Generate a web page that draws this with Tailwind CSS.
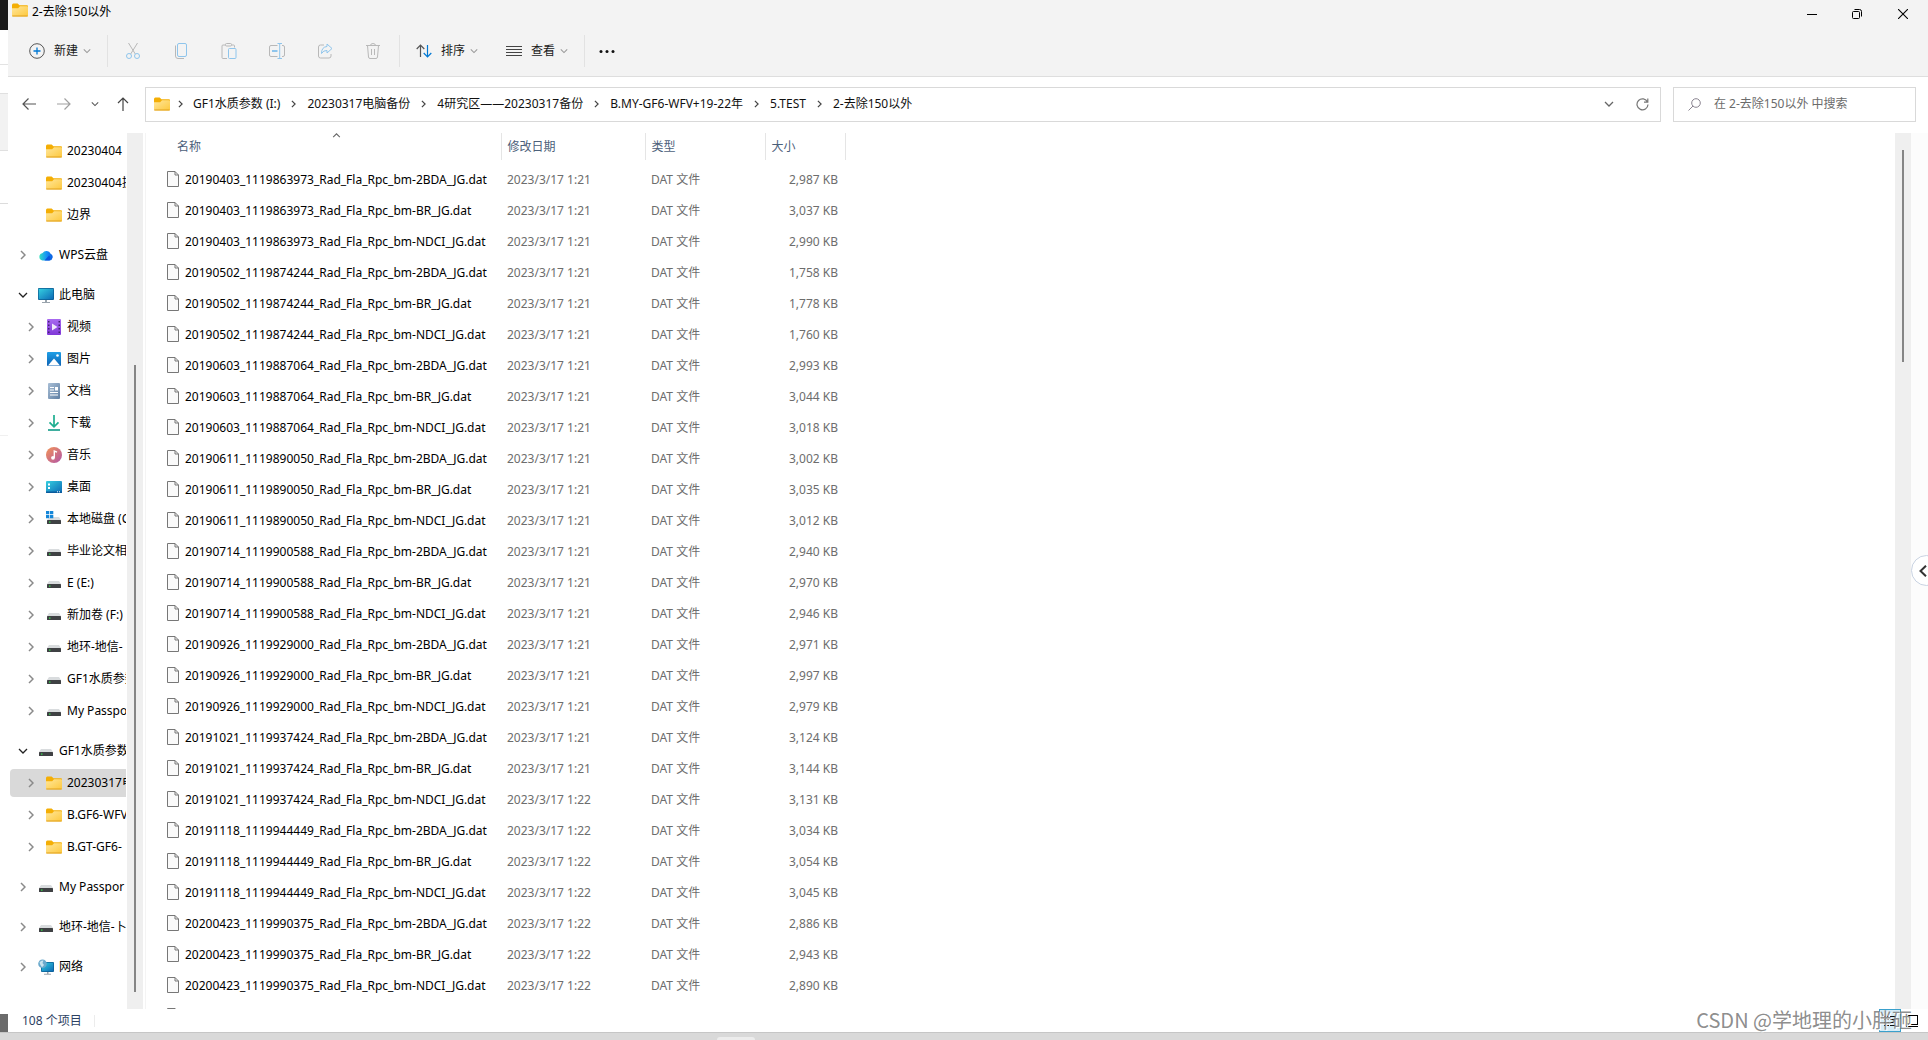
<!DOCTYPE html>
<html lang="zh-CN">
<head>
<meta charset="utf-8">
<title>2-去除150以外</title>
<script src="https://cdn.jsdelivr.net/npm/@tailwindcss/browser@4"></script>
</head>
<body class="h-screen overflow-hidden flex flex-col bg-white text-black text-[12px] leading-4 font-['Noto_Sans','Noto_Sans_CJK_SC',sans-serif]">

<svg class="absolute size-0" aria-hidden="true">
  <defs>
    <linearGradient id="gFolder" x1="0" y1="0" x2="1" y2="1"><stop offset="0" stop-color="#ffe69b"/><stop offset="1" stop-color="#fdc83c"/></linearGradient>
    <linearGradient id="gScreen" x1="0" y1="0" x2="1" y2="1"><stop offset="0" stop-color="#35cfe0"/><stop offset="1" stop-color="#0c69b5"/></linearGradient>
    <linearGradient id="gCloud" x1="0" y1="0" x2="1" y2="0"><stop offset="0" stop-color="#35e0c0"/><stop offset=".5" stop-color="#1897f5"/><stop offset="1" stop-color="#0a5be0"/></linearGradient>
    <linearGradient id="gVideo" x1="0" y1="0" x2="0" y2="1"><stop offset="0" stop-color="#a86af0"/><stop offset="1" stop-color="#8038d8"/></linearGradient>
    <linearGradient id="gPic" x1="0" y1="0" x2="0" y2="1"><stop offset="0" stop-color="#1f9fe6"/><stop offset="1" stop-color="#0c62b4"/></linearGradient>
    <linearGradient id="gDoc" x1="0" y1="0" x2="1" y2="1"><stop offset="0" stop-color="#a9bfd6"/><stop offset="1" stop-color="#5f7fa3"/></linearGradient>
    <linearGradient id="gMusic" x1="0" y1="0" x2="1" y2="1"><stop offset="0" stop-color="#f39455"/><stop offset="1" stop-color="#b154a8"/></linearGradient>
  </defs>
  <symbol id="folder" viewBox="0 0 16 16"><path d="M0 3.2Q0 1.5 1.3 1.5H5.6L7.5 3.3H15Q16 3.3 16 4.3V8H0Z" fill="#f4ae05"/><path d="M0 6.2H6.2L8 4.3H15.2Q16 4.3 16 5.2V13.4Q16 14.5 15 14.5H1Q0 14.5 0 13.4Z" fill="url(#gFolder)"/><path d="M.3 14H15.7" stroke="#e0a01d" stroke-width="1"/></symbol>
  <symbol id="cloud" viewBox="0 0 16 16"><path d="M4.500 13.500H11.500A3.500 3.500 0 0 0 12.600 6.800 4.500 4.500 0 0 0 4.600 6 3.800 3.800 0 0 0 4.500 13.500Z" fill="url(#gCloud)"/><path d="M6.500 13.500L11 8.500A3.400 3.400 0 0 1 11.500 13.500Z" fill="#0a55dc"/></symbol>
  <symbol id="pc" viewBox="0 0 16 16"><rect x="0" y="1" width="16" height="12" rx="1" fill="#0b5c92"/><rect x=".7" y="1.700" width="14.600" height="10.600" rx=".5" fill="url(#gScreen)"/><path d="M7 13H9V15H12V16H4V15H7Z" fill="#9aa4ad"/></symbol>
  <symbol id="video" viewBox="0 0 16 16"><rect x="1" y="0" width="14" height="16" rx="1" fill="url(#gVideo)"/><path d="M2 2h1.500v1.500H2zM2 5.500h1.500V7H2zM2 9h1.500v1.500H2zM2 12.500h1.500V14H2zM12.500 2H14v1.500h-1.500zM12.500 5.500H14V7h-1.500zM12.500 9H14v1.500h-1.500zM12.500 12.500H14V14h-1.500z" fill="#45206f"/><path d="M6 4.500L11.500 8 6 11.500Z" fill="#f1e9fb"/></symbol>
  <symbol id="pic" viewBox="0 0 16 16"><rect x="1" y="1" width="14" height="14" rx="1" fill="url(#gPic)"/><path d="M2 14.500L8 7.500 14 14.500Z" fill="#fff"/><circle cx="11.500" cy="4.500" r="1.300" fill="#fff"/></symbol>
  <symbol id="doc" viewBox="0 0 16 16"><rect x="2" y="0" width="12" height="16" rx="1" fill="url(#gDoc)"/><path d="M4 4.500H8M4 7H8M4 9.500H12M4 12H12" stroke="#fff"/><rect x="9" y="4" width="3" height="3.500" fill="#fff"/></symbol>
  <symbol id="down" viewBox="0 0 16 16"><path d="M8 0V11.500M3.500 7.300L8 11.800 12.500 7.300" fill="none" stroke="#1eae90" stroke-width="1.700"/><path d="M2 15H14" stroke="#109a88" stroke-width="1.600"/></symbol>
  <symbol id="music" viewBox="0 0 16 16"><circle cx="8" cy="8" r="8" fill="url(#gMusic)"/><circle cx="7" cy="10.800" r="1.900" fill="#fff"/><path d="M8.300 10.800V4L11 5.200" fill="none" stroke="#fff" stroke-width="1.400"/></symbol>
  <symbol id="desk" viewBox="0 0 16 16"><rect x="0" y="2" width="16" height="12" rx="1" fill="url(#gScreen)"/><path d="M2 4.500h2v2H2zM2 8h2v2H2z" fill="#fff"/><path d="M0 12.500H16V13.500Q16 14 15 14H1Q0 14 0 13.500Z" fill="#0a5a9c"/><path d="M11 12.800h1M13 12.800h1" stroke="#fff"/></symbol>
  <symbol id="drive" viewBox="0 0 16 16"><path d="M3 6H13L15 9H1Z" fill="#d9dcde"/><rect x="1" y="9" width="14" height="4" rx=".5" fill="#3f4144"/><rect x="3" y="10.500" width="1.500" height="1.200" fill="#35e04a"/></symbol>
  <symbol id="sysdrive" viewBox="0 0 16 16"><path d="M5 6H13L15 9H1L3 7Z" fill="#d9dcde"/><rect x="1" y="9" width="14" height="4" rx=".5" fill="#3f4144"/><rect x="3" y="10.500" width="1.500" height="1.200" fill="#35e04a"/><path d="M0 0h3.300v3.300H0zM4 0h3.300v3.300H4zM0 4h3.300v3.300H0zM4 4h3.300v3.300H4z" fill="#1486d8"/></symbol>
  <symbol id="net" viewBox="0 0 16 16"><rect x="3" y="3" width="13" height="10" rx="1" fill="#0b5c92"/><rect x="3.700" y="3.700" width="11.600" height="8.600" fill="url(#gScreen)"/><path d="M9 13h1.500v1.700H13v1H6v-1h3z" fill="#9aa4ad"/><circle cx="4.500" cy="4.800" r="4.300" fill="#6aa9cc"/><path d="M1.500 3.500Q3 1 5.500 1.500L4.500 4 6 6 4 8.300Q2 6 1.500 3.500Z" fill="#c9e3ee"/></symbol>
  <symbol id="file" viewBox="0 0 12 16"><path d="M.5.500H8L11.500 4V15.500H.5Z" fill="#fafafa" stroke="#777"/><path d="M8 .5V4H11.500" fill="none" stroke="#777"/></symbol>
  <symbol id="chevR" viewBox="0 0 6 10"><path d="M1 1L5 5 1 9" fill="none" stroke="currentColor" stroke-width="1.500"/></symbol>
  <symbol id="chevD" viewBox="0 0 10 6"><path d="M1 1L5 5 9 1" fill="none" stroke="currentColor" stroke-width="1.300"/></symbol>
</svg>

<div class="flex-1 min-h-0 flex">
  <!-- sliver of the window behind -->
  <div class="w-2 shrink-0 flex flex-col">
    <div class="h-[30px] bg-[#1a1a1a]"></div>
    <div class="h-[35px] border-b border-[#e3e3e3]"></div>
    <div class="h-7"></div>
    <div class="h-[58px] bg-[#f2f2f2] border-y border-[#e0e0e0]"></div>
    <div class="h-[53px] border-b border-[#dcdcdc]"></div>
    <div class="h-[232px] border-b border-[#f0f0f0]"></div>
    <div class="flex-1"></div>
    <div class="h-[18px] bg-[#6b6b6b]"></div>
  </div>

  <div class="flex-1 min-w-0 flex flex-col">
    <header class="h-[77px] shrink-0 bg-[#f3f3f3] border-b border-[#dedede] flex flex-col">
      <div class="h-6 flex items-center pl-1">
        <svg class="size-4 -mt-1"><use href="#folder"/></svg>
        <h1 class="ml-1 flex-1">2-去除150以外</h1>
        <div class="flex pt-1 pr-[2px]">
          <button aria-label="最小化" class="w-[45px] grid place-items-center"><svg class="size-[10px]" viewBox="0 0 10 10"><path d="M0 5.500H10" stroke="#000"/></svg></button>
          <button aria-label="还原" class="w-[45px] grid place-items-center"><svg class="size-[10px]" viewBox="0 0 10 10" fill="none" stroke="#000"><rect x=".5" y="2.500" width="7" height="7" rx="1"/><path d="M2.500 .5H7.500Q9.500 .5 9.500 2.500V7.500"/></svg></button>
          <button aria-label="关闭" class="w-[47px] grid place-items-center"><svg class="size-[10px]" viewBox="0 0 10 10"><path d="M0 0L10 10M10 0L0 10" stroke="#000" stroke-width="1.100"/></svg></button>
        </div>
      </div>
      <div class="flex-1 flex items-center pt-px text-[#1a1a1a]">
        <button class="ml-[21px] flex items-center gap-[9px]">
          <svg class="size-4" viewBox="0 0 16 16" fill="none"><circle cx="8" cy="8" r="7.300" stroke="#555"/><path d="M8 4.500V11.500M4.500 8H11.500" stroke="#0078d4" stroke-width="1.300"/></svg>
          <span>新建</span><svg class="w-2 h-[6px] -ml-1 text-[#999]"><use href="#chevD"/></svg>
        </button>
        <div class="ml-4 w-px h-8 bg-[#e2e2e2]"></div>
        <div class="mx-px flex">
          <button aria-label="剪切" class="w-12 grid place-items-center"><svg class="size-4" viewBox="0 0 16 16" fill="none"><path d="M3.500 0L10.300 11M12.500 0L5.700 11" stroke="#b8b8b8"/><circle cx="4" cy="13" r="2.500" stroke="#8fc5ec"/><circle cx="12" cy="13" r="2.500" stroke="#8fc5ec"/></svg></button>
          <button aria-label="复制" class="w-12 grid place-items-center"><svg class="size-4" viewBox="0 0 16 16" fill="none"><rect x="4.500" y=".5" width="9" height="13" rx="1.500" stroke="#8fc5ec"/><path d="M2.500 2.500V13Q2.500 15.500 5 15.500H11" stroke="#b8b8b8"/></svg></button>
          <button aria-label="粘贴" class="w-12 grid place-items-center"><svg class="size-4" viewBox="0 0 16 16" fill="none"><path d="M4.500 2H2Q1 2 1 3V14.500Q1 15.500 2 15.500H6M10.500 2H12.500Q13.500 2 13.500 3V4.500" stroke="#b8b8b8"/><rect x="4.500" y=".5" width="6" height="2.500" rx="1" stroke="#b8b8b8"/><rect x="7.500" y="5.500" width="7.500" height="10" rx="1" stroke="#8fc5ec"/></svg></button>
          <button aria-label="重命名" class="w-12 grid place-items-center"><svg class="size-4" viewBox="0 0 16 16" fill="none"><path d="M8.500 2.500H2Q.5 2.500 .5 4V12Q.5 13.500 2 13.500H8.500M13 2.500H14Q15.500 2.500 15.500 4V12Q15.500 13.500 14 13.500H13" stroke="#b8b8b8"/><path d="M8.500 .5H13M8.500 15.500H13M10.700 .5V15.500" stroke="#8fc5ec"/><path d="M3 8H8.500" stroke="#8fc5ec" stroke-width="2"/></svg></button>
          <button aria-label="共享" class="w-12 grid place-items-center"><svg class="size-4" viewBox="0 0 16 16" fill="none"><path d="M7 2H3.500Q1.500 2 1.500 4V13Q1.500 15 3.500 15H12Q14 15 14 13V11" stroke="#b8b8b8"/><path d="M10 1L15 5.500 10 10V7.500Q6.500 7.200 4.500 10.500 4.500 4 10 3.500Z" stroke="#8fc5ec"/></svg></button>
          <button aria-label="删除" class="w-12 grid place-items-center"><svg class="size-4" viewBox="0 0 16 16" fill="none" stroke="#b8b8b8"><path d="M1 2.500H15M5.500 2.500Q5.500 .5 8 .5T10.500 2.500M2.500 2.500L3.500 14Q3.700 15.500 5 15.500H11Q12.300 15.500 12.500 14L13.500 2.500M6.500 6V12M9.500 6V12"/></svg></button>
        </div>
        <div class="ml-px w-px h-8 bg-[#e2e2e2]"></div>
        <button class="ml-4 flex items-center gap-[9px]">
          <svg class="size-4" viewBox="0 0 16 16" fill="none" stroke-width="1.200"><path d="M4.500 14V2M.7 6L4.500 2 8.300 6" stroke="#555"/><path d="M11.500 2V14M7.700 10L11.500 14 15.300 10" stroke="#0078d4"/></svg>
          <span>排序</span><svg class="w-2 h-[6px] -ml-1 text-[#999]"><use href="#chevD"/></svg>
        </button>
        <button class="ml-7 flex items-center gap-[9px]">
          <svg class="size-4" viewBox="0 0 16 16"><path d="M0 3.500H16M0 6.500H16M0 9.500H16M0 12.500H16" stroke="#444"/></svg>
          <span>查看</span><svg class="w-2 h-[6px] -ml-1 text-[#999]"><use href="#chevD"/></svg>
        </button>
        <div class="ml-4 w-px h-8 bg-[#e2e2e2]"></div>
        <button aria-label="更多" class="ml-[14px]"><svg class="size-4" viewBox="0 0 16 16" fill="#111"><circle cx="2" cy="8.500" r="1.500"/><circle cx="8" cy="8.500" r="1.500"/><circle cx="14" cy="8.500" r="1.500"/></svg></button>
      </div>
    </header>

    <nav class="h-14 shrink-0 flex items-center pr-3 pl-[14px] pb-[2px]">
      <div class="w-[123px] flex items-center">
        <button aria-label="后退" class="w-[14px]"><svg class="size-[14px]" viewBox="0 0 14 14" fill="none" stroke="#555" stroke-width="1.200"><path d="M14 7H1M6.500 1.500L1 7 6.500 12.500"/></svg></button>
        <button aria-label="前进" class="ml-[21px] w-[14px]"><svg class="size-[14px]" viewBox="0 0 14 14" fill="none" stroke="#a0a0a0" stroke-width="1.200"><path d="M0 7H13M7.500 1.500L13 7 7.500 12.500"/></svg></button>
        <button aria-label="最近" class="ml-5 w-2"><svg class="w-2 h-[6px] text-[#555]"><use href="#chevD"/></svg></button>
        <button aria-label="向上" class="ml-[18px] w-3"><svg class="w-3 h-[14px]" viewBox="0 0 12 14" fill="none" stroke="#444" stroke-width="1.200"><path d="M6 14V1M1 6L6 1 11 6"/></svg></button>
      </div>
      <div class="flex-1 h-[35px] border border-[#d9d9d9] flex items-center pl-2 text-[#111]">
        <svg class="size-4"><use href="#folder"/></svg>
        <svg class="mx-2 w-[5px] h-2 text-[#444]"><use href="#chevR"/></svg>
        <div id="crumbs" class="flex-1 flex items-center pl-[2px]"></div>
        <button aria-label="展开" class="mr-[22px]"><svg class="w-[10px] h-[6px] text-[#666]"><use href="#chevD"/></svg></button>
        <button aria-label="刷新" class="mr-[11px]"><svg class="size-[13px]" viewBox="0 0 13 13" fill="none" stroke="#777" stroke-width="1.200"><path d="M11.500 4A5.500 5.500 0 1 0 12 6.500M11.800 .5V4.200H8"/></svg></button>
      </div>
      <label class="ml-3 w-[243px] h-[35px] border border-[#d9d9d9] flex items-center pl-[14px] gap-[13px]">
        <svg class="size-[13px] shrink-0" viewBox="0 0 13 13" fill="none" stroke="#8a8490"><circle cx="8" cy="5" r="4.300"/><path d="M5 8L.5 12.500"/></svg>
        <input type="text" aria-label="搜索" placeholder="在 2-去除150以外 中搜索" class="w-full outline-none placeholder:text-[#6b6b6b]">
      </label>
    </nav>

    <div class="flex-1 min-h-0 flex">
      <aside class="w-[118px] shrink-0 overflow-hidden pt-[2px] pl-[2px]">
        <ul id="tree"></ul>
      </aside>
      <div class="ml-px w-4 shrink-0 bg-[#efefef] flex flex-col items-center pt-[232px] pb-[17px]"><div class="flex-1 w-[2px] bg-[#858585]"></div></div>
      <main class="ml-[2px] flex-1 min-w-0 overflow-hidden border-l border-[#f4f4f4]">
        <table class="table-fixed w-[699px] border-collapse whitespace-nowrap text-[#6d6d6d]">
          <colgroup><col class="w-[355px]"><col class="w-[144px]"><col class="w-[120px]"><col class="w-[80px]"></colgroup>
          <thead class="text-left text-[#4c607a]">
            <tr class="h-[27px]">
              <th class="relative font-normal pl-[31px] border-r border-[#e5e5e5]">名称<svg class="absolute left-[186px] top-0 w-[9px] h-[5px] rotate-180 text-[#666]"><use href="#chevD"/></svg></th>
              <th class="font-normal pl-[6px] border-r border-[#e5e5e5]">修改日期</th>
              <th class="font-normal pl-[6px] border-r border-[#e5e5e5]">类型</th>
              <th class="font-normal pl-[6px] border-r border-[#e5e5e5]">大小</th>
            </tr>
            <tr class="h-1"></tr>
          </thead>
          <tbody id="files"></tbody>
        </table>
      </main>
      <div class="w-4 shrink-0 bg-[#efefef] flex flex-col items-center pt-[17px]"><div class="h-[212px] w-[2px] bg-[#858585]"></div></div>
      <div class="w-[17px] shrink-0 bg-[#fcfcfc]"></div>
    </div>

    <footer class="h-[23px] shrink-0 flex items-center pl-[14px] pr-[10px] text-[#2d4263]">
      <span>108 个项目</span>
      <div class="ml-3 w-px h-3 bg-[#ececec]"></div>
      <div class="ml-auto flex items-center gap-1">
        <button aria-label="详细信息" class="w-[22px] h-[23px] border border-[#3aa0cc] bg-[#d5ecf7] grid place-items-center"><svg class="w-3 h-3" viewBox="0 0 12 12"><path d="M0 1.500H5M6 1.500H12M0 4.500H5M6 4.500H12M0 7.500H5M6 7.500H12M0 10.500H5M6 10.500H12" stroke="#111"/></svg></button>
        <button aria-label="大图标" class="ml-px w-3 grid place-items-center"><svg class="w-3 h-3" viewBox="0 0 12 12" fill="none" stroke="#000"><rect x="1.500" y=".5" width="10" height="9"/><path d="M0 11.500H12"/></svg></button>
      </div>
    </footer>
  </div>
</div>

<div class="h-2 shrink-0 bg-[#d9d9d9] border-t border-[#c6c6c6] flex items-end"><div class="ml-[37.2%] w-[38px] h-[3px] rounded-t bg-[#ececec]"></div></div>

<div class="absolute right-4 bottom-2 text-[20px] leading-6 text-[#808080]/90 font-['Noto_Sans_CJK_SC',sans-serif] text-shadow-[1px_1px_0_#ffffff] pointer-events-none">CSDN @学地理的小胖砸</div>
<button aria-label="展开侧栏" class="absolute -right-[14px] top-[555px] size-[31px] rounded-full bg-white border border-[#c9d3e2] flex items-center pl-[7px]"><svg class="w-2 h-3" viewBox="0 0 8 12"><path d="M7 .7L1.500 6 7 11.300" fill="none" stroke="#333" stroke-width="2"/></svg></button>

<script>
const crumbs = ['GF1水质参数 (I:)', '20230317电脑备份', '4研究区——20230317备份', 'B.MY-GF6-WFV+19-22年', '5.TEST', '2-去除150以外'];
document.getElementById('crumbs').innerHTML = crumbs.map(c => `<a href="#">${c}</a>`)
  .join('<svg class="mx-[11px] w-[5px] h-2 text-[#444]"><use href="#chevR"/></svg>');

// [level, icon, label, state, starts a new group]
const tree = [
  [2, 'folder', '20230404', '', 0], [2, 'folder', '20230404提取', '', 0], [2, 'folder', '边界', '', 0],
  [1, 'cloud', 'WPS云盘', 'closed', 1],
  [1, 'pc', '此电脑', 'open', 1],
  [2, 'video', '视频', 'closed', 0], [2, 'pic', '图片', 'closed', 0], [2, 'doc', '文档', 'closed', 0],
  [2, 'down', '下载', 'closed', 0], [2, 'music', '音乐', 'closed', 0], [2, 'desk', '桌面', 'closed', 0],
  [2, 'sysdrive', '本地磁盘 (C:)', 'closed', 0], [2, 'drive', '毕业论文相关', 'closed', 0], [2, 'drive', 'E (E:)', 'closed', 0],
  [2, 'drive', '新加卷 (F:)', 'closed', 0], [2, 'drive', '地环-地信-', 'closed', 0], [2, 'drive', 'GF1水质参数', 'closed', 0],
  [2, 'drive', 'My Passport', 'closed', 0],
  [1, 'drive', 'GF1水质参数', 'open', 1],
  [2, 'folder', '20230317电脑备份', 'selected', 0], [2, 'folder', 'B.GF6-WFV', 'closed', 0], [2, 'folder', 'B.GT-GF6-', 'closed', 0],
  [1, 'drive', 'My Passpor', 'closed', 1],
  [1, 'drive', '地环-地信-卜', 'closed', 1],
  [1, 'net', '网络', 'closed', 1],
];
document.getElementById('tree').innerHTML = tree.map(([level, icon, label, state, group]) => {
  const arrow = state === 'open' ? '<svg class="w-[10px] h-[6px] text-[#222]"><use href="#chevD"/></svg>'
    : state ? '<svg class="w-[6px] h-[10px] text-[#8a8a8a]"><use href="#chevR"/></svg>' : '';
  return `<li class="py-[2px] ${group ? 'mt-2' : 'mt-0'}"><a href="#" class="h-7 flex items-center whitespace-nowrap rounded-l-sm ${level === 2 ? 'pl-4' : 'pl-2'} ${state === 'selected' ? 'bg-[#d9d9d9]' : ''}">
    <span class="w-5 shrink-0 flex ${state === 'open' ? '' : 'pl-[2px]'}">${arrow}</span><svg class="size-4 shrink-0"><use href="#${icon}"/></svg><span class="ml-[5px]">${label}</span></a></li>`;
}).join('');

const scenes = [
  ['20190403_1119863973', '2,987', '3,037', '2,990'], ['20190502_1119874244', '1,758', '1,778', '1,760'],
  ['20190603_1119887064', '2,993', '3,044', '3,018'], ['20190611_1119890050', '3,002', '3,035', '3,012'],
  ['20190714_1119900588', '2,940', '2,970', '2,946'], ['20190926_1119929000', '2,971', '2,997', '2,979'],
  ['20191021_1119937424', '3,124', '3,144', '3,131'], ['20191118_1119944449', '3,034', '3,054', '3,045'],
  ['20200423_1119990375', '2,886', '2,943', '2,890'],
];
const fileIcon = '<svg class="w-3 h-4 mb-[2px] shrink-0"><use href="#file"/></svg>';
let n = 0;
document.getElementById('files').innerHTML = scenes.flatMap(([id, ...sizes]) => sizes.map((size, i) => {
  const time = n++ < 20 ? '1:21' : '1:22';
  return `<tr class="h-[31px]"><td class="pl-[21px]"><a href="#" class="flex items-center gap-[6px] text-black">${fileIcon}${id}_Rad_Fla_Rpc_bm-${['2BDA', 'BR', 'NDCI'][i]}_JG.dat</a></td>
    <td class="pl-[6px]">2023/3/17 ${time}</td><td class="pl-[6px]">DAT 文件</td><td class="pr-[7px] text-right">${size} KB</td></tr>`;
})).join('') + `<tr class="h-[31px]"><td class="pl-[21px]">${fileIcon}</td></tr>`;
</script>
</body>
</html>
